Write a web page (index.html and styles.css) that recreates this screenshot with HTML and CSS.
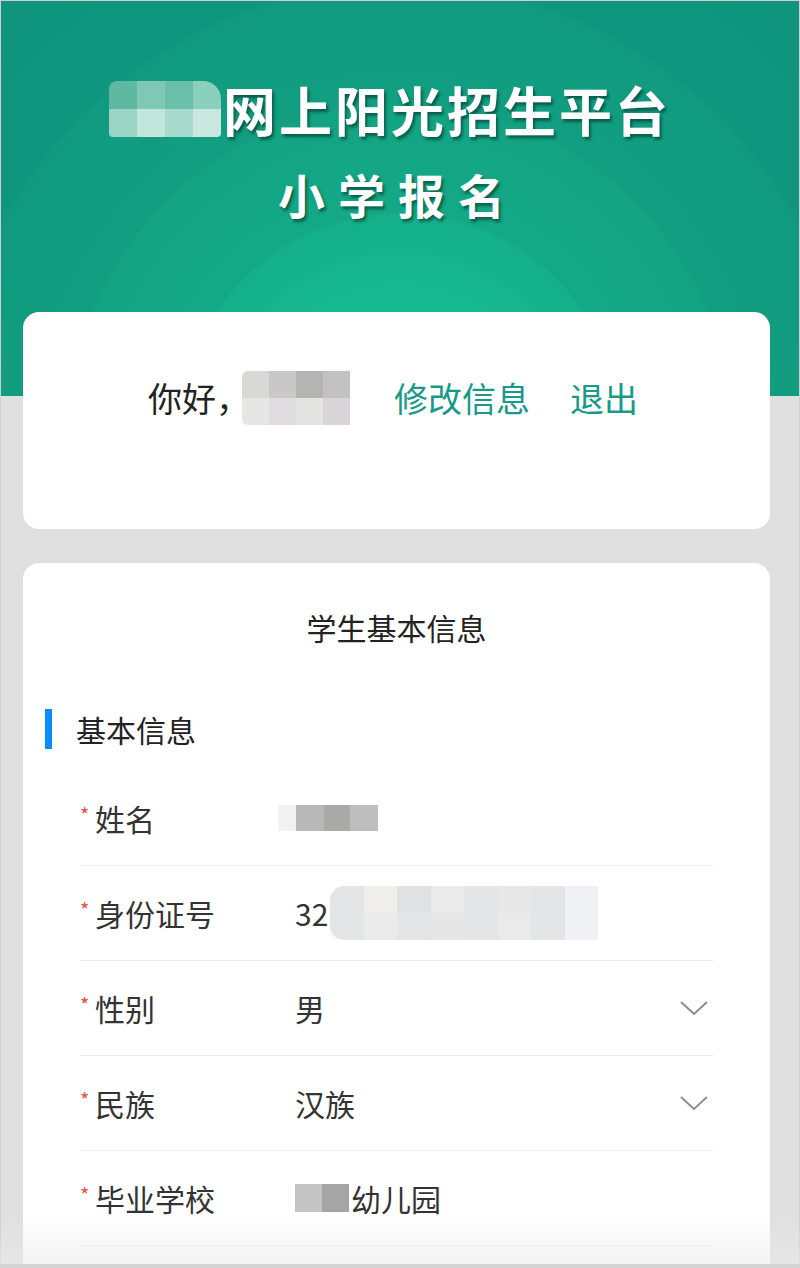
FILE: index.html
```html
<!DOCTYPE html>
<html lang="zh-CN">
<head>
  <meta charset="UTF-8" />
  <meta name="viewport" content="width=device-width, initial-scale=1.0"/>
  <title>小学报名</title>
  <link rel="stylesheet" href="styles.css">
</head>
<body>
  <div class="page">
    <header class="banner">
      <h1 class="banner-title">
        <span class="mosaic mosaic-city"><i></i><i></i><i></i><i></i><i></i><i></i><i></i><i></i></span>网上阳光招生平台
      </h1>
      <h2 class="banner-sub">小学报名</h2>
    </header>

    <main class="content">
      <section class="card greet-card">
        <div class="greet">
          <span class="hello">你好，</span>
          <span class="mosaic mosaic-user"><i></i><i></i><i></i><i></i><i></i><i></i><i></i><i></i></span>
          <a class="link" href="#">修改信息</a>
          <a class="link" href="#">退出</a>
        </div>
      </section>

      <section class="card form-card">
        <h3 class="form-title">学生基本信息</h3>
        <div class="section-head">基本信息</div>

        <div class="rows">
          <div class="row">
            <label class="row-label"><em>*</em>姓名</label>
            <div class="row-value"><span class="mosaic mosaic-name"><i></i><i></i><i></i><i></i></span></div>
          </div>
          <div class="row">
            <label class="row-label"><em>*</em>身份证号</label>
            <div class="row-value">32<span class="mosaic mosaic-id"><i></i><i></i><i></i><i></i><i></i><i></i><i></i><i></i><i></i><i></i><i></i><i></i><i></i><i></i><i></i><i></i></span></div>
          </div>
          <div class="row">
            <label class="row-label"><em>*</em>性别</label>
            <div class="row-value">男</div>
            <svg class="chevron" viewBox="0 0 30 16" width="30" height="16"><polyline points="2,2 15,14 28,2" /></svg>
          </div>
          <div class="row">
            <label class="row-label"><em>*</em>民族</label>
            <div class="row-value">汉族</div>
            <svg class="chevron" viewBox="0 0 30 16" width="30" height="16"><polyline points="2,2 15,14 28,2" /></svg>
          </div>
          <div class="row">
            <label class="row-label"><em>*</em>毕业学校</label>
            <div class="row-value"><span class="mosaic mosaic-school"><i></i><i></i></span>幼儿园</div>
          </div>
        </div>
      </section>
    </main>
    <div class="bottom-fade"></div>
  </div>
</body>
</html>
```

FILE: styles.css
```css
* { box-sizing: border-box; }
html, body { margin: 0; padding: 0; }
body {
  font-family: "Noto Sans CJK SC", "Noto Sans", "Liberation Sans", sans-serif;
  background: #e0e0e0;
  color: #222;
}
.page {
  min-height: 1268px;
  border: 1px solid #cfcfcf;
  border-bottom: none;
  overflow: hidden;
}

/* banner */
.banner {
  height: 395px;
  padding-top: 76px;
  text-align: center;
  color: #fff;
  background:
    radial-gradient(circle at 50% 110%,
      #18c998 0, #16bd91 100px, #15b08a 220px,
      #14a986 222px, #13a383 330px,
      #129f81 332px, #119a80 450px,
      #10967e 452px, #0f927c 720px);
}
.banner-title {
  margin: 0;
  font-size: 53px;
  font-weight: 700;
  line-height: 64px;
  letter-spacing: 3px;
  text-shadow: 2px 3px 3px rgba(0, 40, 30, 0.55);
  display: flex;
  justify-content: center;
  align-items: center;
  padding-right: 20px;
}
.banner-sub {
  margin: 24px 0 0;
  font-size: 47px;
  font-weight: 700;
  line-height: 58px;
  letter-spacing: 13px;
  text-shadow: 2px 3px 3px rgba(0, 40, 30, 0.55);
  padding-right: 4px;
}

/* mosaics for blurred text */
.mosaic { display: inline-grid; vertical-align: middle; }
.mosaic i { display: block; }
.mosaic-city {
  width: 112px; height: 56px;
  grid-template-columns: repeat(4, 1fr);
  border-radius: 8px 18px 4px 4px;
  overflow: hidden;
  margin-right: 2px;
  text-shadow: none;
}
.mosaic-city i:nth-child(1) { background: #5fb9a1; }
.mosaic-city i:nth-child(2) { background: #7fc8b5; }
.mosaic-city i:nth-child(3) { background: #69bfa8; }
.mosaic-city i:nth-child(4) { background: #8ccfbd; }
.mosaic-city i:nth-child(5) { background: #9ad4c4; }
.mosaic-city i:nth-child(6) { background: #c2e5dc; }
.mosaic-city i:nth-child(7) { background: #a7dacc; }
.mosaic-city i:nth-child(8) { background: #cbe8e0; }

.mosaic-user {
  width: 108px; height: 54px;
  grid-template-columns: repeat(4, 1fr);
  border-radius: 6px 0 0 6px;
  overflow: hidden;
  margin: 0 44px 0 0;
}
.mosaic-user i:nth-child(1) { background: #d8d8d6; }
.mosaic-user i:nth-child(2) { background: #c9c8c6; }
.mosaic-user i:nth-child(3) { background: #b4b5b3; }
.mosaic-user i:nth-child(4) { background: #c3c1c3; }
.mosaic-user i:nth-child(5) { background: #e6e6e4; }
.mosaic-user i:nth-child(6) { background: #dfdbdf; }
.mosaic-user i:nth-child(7) { background: #e3e4e2; }
.mosaic-user i:nth-child(8) { background: #d9d5d9; }

.mosaic-name {
  width: 108px; height: 26px;
  grid-template-columns: 18px 28px 26px 28px 8px;
  margin-left: -17px;
}
.mosaic-name i:nth-child(1) { background: #f3f2f1; }
.mosaic-name i:nth-child(2) { background: #b7b8b7; }
.mosaic-name i:nth-child(3) { background: #a9a9a8; }
.mosaic-name i:nth-child(4) { background: #bebebe; }

.mosaic-id {
  width: 268px; height: 54px;
  grid-template-columns: repeat(8, 1fr);
  border-radius: 14px 0 0 14px;
  overflow: hidden;
  margin-left: 2px;
}
.mosaic-id i:nth-child(odd) { background: #e4e5e6; }
.mosaic-id i:nth-child(even) { background: #eaeaea; }
.mosaic-id i:nth-child(2) { background: #efeeeb; }
.mosaic-id i:nth-child(3) { background: #e0e2e3; }
.mosaic-id i:nth-child(6) { background: #e8e8e8; }
.mosaic-id i:nth-child(8) { background: #f0f1f4; }
.mosaic-id i:nth-child(12) { background: #e7e6e6; }
.mosaic-id i:nth-child(16) { background: #f0f1f5; }

.mosaic-school {
  width: 54px; height: 28px;
  grid-template-columns: 1fr 1fr;
  margin-right: 2px;
}
.mosaic-school i:nth-child(1) { background: #c4c4c4; }
.mosaic-school i:nth-child(2) { background: #a6a5a6; }

/* content */
.content {
  margin-top: -84px;
  padding: 0 29px 0 22px;
}
.card {
  background: #fff;
  border-radius: 16px;
}
.greet-card {
  height: 217px;
  padding-top: 58px;
}
.greet {
  display: flex;
  align-items: center;
  padding-left: 125px;
  font-size: 34px;
  line-height: 56px;
}
.hello { color: #222; margin-right: -8px; }
.link {
  color: #18998a;
  text-decoration: none;
  margin-right: 40px;
}

.form-card {
  margin-top: 34px;
  min-height: 720px;
  padding-top: 40px;
}
.form-title {
  margin: 0;
  font-size: 30px;
  font-weight: 400;
  line-height: 48px;
  text-align: center;
  color: #222;
}
.section-head {
  margin-top: 58px;
  margin-left: 22px;
  border-left: 7px solid #0a8cff;
  padding-left: 24px;
  height: 40px;
  line-height: 40px;
  font-size: 30px;
  color: #222;
}
.rows {
  margin-top: 22px;
  padding: 0 57px;
}
.row {
  display: flex;
  align-items: center;
  height: 95px;
  border-bottom: 1px solid #eeeff1;
  font-size: 30px;
  color: #333;
}
.row-label {
  width: 215px;
  flex: none;
  position: relative;
  padding-left: 15px;
}
.row-label em {
  position: absolute;
  left: 0;
  top: 9px;
  font-style: normal;
  font-size: 20px;
  line-height: 20px;
  color: #f04a4a;
}
.row-value {
  flex: 1;
  display: flex;
  align-items: center;
  color: #333;
}
.chevron {
  margin-right: 4px;
  fill: none;
  stroke: #8d8d8d;
  stroke-width: 2;
}

.bottom-fade {
  position: fixed;
  left: 0; right: 0; bottom: 0;
  height: 56px;
  background: linear-gradient(to bottom, rgba(235,235,235,0), rgba(235,235,235,0.55));
  border-bottom: 4px solid #d4d4d4;
  pointer-events: none;
}
```
